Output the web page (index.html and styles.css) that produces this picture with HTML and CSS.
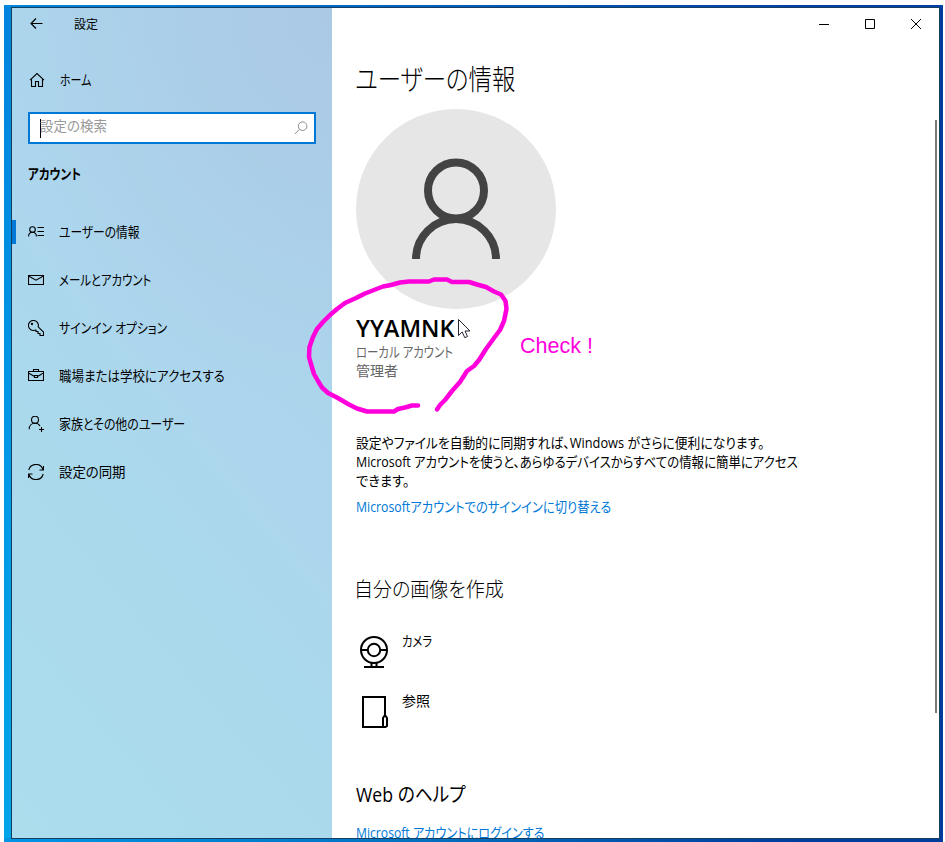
FILE: index.html
```
<!DOCTYPE html>
<html lang="ja">
<head>
<meta charset="utf-8">
<title>設定</title>
<link rel="stylesheet" href="styles.css">
</head>
<body>
<div class="desktop">
  <div class="window">
    <aside class="sidebar">
      <header class="titlebar">
        <svg class="back" width="14" height="12" viewBox="0 0 14 12"><path d="M12.500 5.500H1M6 .5l-5 5 5 5"/></svg>
        <span>設定</span>
      </header>
      <a class="item home">
        <svg class="icon" width="16" height="16" viewBox="0 0 16 16"><path d="M1 8.200L8 1.500l7 6.700M2.500 7v7.500h4v-5h3v5h4V7"/></svg>
        <span class="label w-home">ホーム</span>
      </a>
      <div class="search">
        <i class="caret"></i>
        <span class="label w-search">設定の検索</span>
        <svg class="lens" width="14" height="14" viewBox="0 0 14 14"><circle cx="8.600" cy="5.200" r="4.300"/><path d="M5.500 8.300L.8 13"/></svg>
      </div>
      <h2 class="section"><span class="label w-section">アカウント</span></h2>
      <nav>
        <a class="item active">
          <svg class="icon" width="16" height="16" viewBox="0 0 16 16"><circle cx="4.500" cy="5.500" r="2.800"/><path d="M.6 12.500c0-2.600 1.500-4.200 3.900-4.200s3.900 1.600 3.900 4.200M9.500 3.500H16M9.500 7.500H16M9.500 11.500H16"/></svg>
          <span class="label w-info">ユーザーの情報</span>
        </a>
        <a class="item">
          <svg class="icon" width="16" height="16" viewBox="0 0 16 16"><path d="M.5 3.500h15v9H.5zM.5 4L8 8.200 15.500 4"/></svg>
          <span class="label w-mail">メールとアカウント</span>
        </a>
        <a class="item">
          <svg class="icon" width="16" height="16" viewBox="0 0 16 16"><path d="M10.200 6.800A5 5 0 1 0 6.600 10.300L8 10.200v1.300h2v2h2v2h3.500v-3.500z"/><circle cx="4" cy="4" r=".6"/></svg>
          <span class="label w-signin">サインイン オプション</span>
        </a>
        <a class="item">
          <svg class="icon" width="16" height="16" viewBox="0 0 16 16"><path d="M.5 3.500h15v9H.5zM5.500 3.500v-2h5v2M.5 5L6.500 8.500M9.500 8.500l6-3.500M6.500 7.500h3v2h-3z"/></svg>
          <span class="label w-work">職場または学校にアクセスする</span>
        </a>
        <a class="item">
          <svg class="icon" width="16" height="16" viewBox="0 0 16 16"><circle cx="7" cy="3.700" r="3.500"/><path d="M1.200 13.200C1.200 9.700 3.500 7.200 7 7.200c2.300 0 4 .9 5 2.700M13.500 11v5M11 13.500h5"/></svg>
          <span class="label w-family">家族とその他のユーザー</span>
        </a>
        <a class="item">
          <svg class="icon" width="16" height="16" viewBox="0 0 16 16"><path d="M.8 6A7.400 7.400 0 0 1 15 5.500M15.500 2v4h-4M15.200 10A7.400 7.400 0 0 1 1 10.500M.5 14v-4h4"/></svg>
          <span class="label w-sync">設定の同期</span>
        </a>
      </nav>
    </aside>
    <main class="content">
      <div class="controls">
        <span><svg width="10" height="10" viewBox="0 0 10 10"><path d="M0 5.500h10"/></svg></span>
        <span><svg width="10" height="10" viewBox="0 0 10 10"><path d="M.5.5h9v9h-9z"/></svg></span>
        <span><svg width="10" height="10" viewBox="0 0 10 10"><path d="M0 0l10 10M10 0L0 10"/></svg></span>
      </div>
      <h1><span class="label w-h1">ユーザーの情報</span></h1>
      <div class="avatar">
        <svg width="200" height="200" viewBox="0 0 200 200"><circle cx="100" cy="81.500" r="28"/><path d="M60 150a40 40 0 0 1 80 0"/></svg>
      </div>
      <div class="name"><span class="label w-name">YYAMNK</span></div>
      <div class="meta"><span class="label w-local">ローカル アカウント</span></div>
      <div class="meta">管理者</div>
      <div class="text">
        <div><span class="label w-p1">設定やファイルを自動的に同期すれば、Windows がさらに便利になります。</span></div>
        <div><span class="label w-p2">Microsoft アカウントを使うと、あらゆるデバイスからすべての情報に簡単にアクセス</span></div>
        <div><span class="label w-p3">できます。</span></div>
      </div>
      <a class="link"><span class="label w-switch">Microsoftアカウントでのサインインに切り替える</span></a>
      <h3 class="create"><span class="label w-create">自分の画像を作成</span></h3>
      <div class="source">
        <svg width="36" height="36" viewBox="0 0 36 36"><circle cx="18" cy="17" r="13"/><circle cx="18" cy="17" r="6.200"/><path d="M5 17h7M24 17h7M15.500 30v4M20.500 30v4M8 34h20"/></svg>
        <span class="label w-camera">カメラ</span>
      </div>
      <div class="source">
        <svg width="36" height="36" viewBox="0 0 36 36"><path d="M29 22V4H7v30h21M27 34V25l2-3 2 3v8l-1.500 1z"/></svg>
        <span class="label">参照</span>
      </div>
      <h3 class="help"><span class="label w-help">Web のヘルプ</span></h3>
      <a class="link"><span class="label w-login">Microsoft アカウントにログインする</span></a>
      <i class="scrollbar"></i>
    </main>
  </div>
  <svg class="markup" width="945" height="842" viewBox="0 0 945 842">
    <path class="pointer" d="M458.500 319.500v16l3.700-3.500 2.600 5.700 2.700-1.200-2.500-5.500h5z"/>
    <path class="ink" d="M418 405.500L412 405.500 405 407.500 398 409 394 411.500 367 411.500 357 408.500 349 404.500 343 401 336 397 328 393 322 387.500 318 381 314 374 311 364 309 357 309.500 347 313 337 317 329 323 322 330 315 337 309 345 303 356 298 365 293.500 374 290 383 286.500 391 285 400 282.500 409 281.500 429 281.500 434 279.500 447 279.500 452 282 469 282 477 284.500 486 287 494 291.500 501 294.500 505.500 301 506.500 309 504 321 500 330 494 338 486 349 479 360 474 366 467 371 460 382 452 391 445 400 440 405 437 409.500"/>
  </svg>
  <span class="check">Check !</span>
</div>
</body>
</html>
```
FILE: styles.css
```
* { box-sizing: border-box; }
body {
  margin: 0;
  height: 842px;
  overflow: hidden;
  padding: 5px 2px 0 4px;
  background: #fff;
  color: #000;
  font: 14px/20px "Open Sans", "Noto Sans CJK JP", sans-serif;
  font-feature-settings: "palt";
}
h1, h2, h3 { margin: 0; }
svg { fill: none; stroke: #000; flex: none; }
.desktop {
  height: 837px;
  padding: 2px 3px 3px 7px;
  background:
    linear-gradient(90deg, #0095e4, #0070c0 45%, #003c9c 85%) bottom / 100% 4px no-repeat,
    linear-gradient(90deg, #0086dc, #0060be 45%, #003ea8 85%) top / 100% 3px no-repeat,
    linear-gradient(90deg, transparent 50%, #003c9e 50%),
    linear-gradient(#0083dc, #0098e6 50%, #00a4e8);
}
.window {
  display: flex;
  height: 832px;
  border: 1px solid #143f60;
  overflow: hidden;
}
.sidebar {
  width: 320px;
  flex: none;
  background:
    radial-gradient(ellipse 320px 400px at 100% 0, #abc9e5, rgba(171, 201, 229, 0)),
    linear-gradient(50deg, #abdded 0%, #aad9ec 35%, #acd6ed 55%, #abd3ea 100%);
}
.titlebar {
  display: flex;
  align-items: center;
  height: 32px;
  padding-left: 18px;
  font-size: 12px;
}
.titlebar span { margin: 2px 0 0 30px; }
.back { stroke-width: 1.2; }
.icon { stroke-width: 1.1; }
.label {
  display: inline-block;
  white-space: nowrap;
  transform-origin: 0 50%;
}
.item {
  display: flex;
  align-items: center;
  height: 48px;
  padding-left: 16px;
}
.item .label { margin-left: 15px; }
.home { height: 40px; margin: 20px 0 12px; padding-left: 17px; }
.active {
  height: 24px;
  margin: 12px 0;
  padding-left: 12px;
  border-left: 4px solid #0078d7;
}
.search {
  display: flex;
  align-items: center;
  width: 288px;
  height: 32px;
  margin: 8px 0 0 16px;
  padding: 0 6px 0 10px;
  border: 2px solid #0078d7;
  background: #fff;
  color: #999;
}
.search .label { margin: -4px 0 0 -1px; }
.caret { width: 1px; height: 19px; background: #000; }
.lens { margin-left: auto; stroke: #8c8c8c; }
.section {
  margin: 20px 0 36px 16px;
  font-size: 14px;
  line-height: 20px;
}
.content {
  position: relative;
  flex: 1;
  padding-left: 24px;
  background: #fff;
}
.controls {
  display: flex;
  justify-content: flex-end;
  height: 32px;
}
.controls span {
  display: flex;
  align-items: center;
  justify-content: center;
  width: 46px;
}
h1 {
  margin: 19px 0 0 -1px;
  height: 50px;
  font-size: 28px;
  font-weight: 300;
  line-height: 40px;
}
.avatar {
  width: 200px;
  height: 200px;
  border-radius: 50%;
  background: #e6e6e6;
}
.avatar svg { stroke: #434343; stroke-width: 8; }
.name {
  margin-top: 4px;
  height: 29px;
  font-size: 24px;
  font-weight: 600;
  line-height: 30px;
}
.meta { height: 19px; line-height: 19px; color: #666; }
.text { margin-top: 53px; line-height: 19px; }
.text div { height: 19px; }
.link { display: block; height: 20px; color: #0078d7; }
.text + .link { margin-top: 7px; }
h3 {
  height: 30px;
  font-size: 20px;
  font-weight: 300;
  line-height: 30px;
}
.create { margin: 58px 0 26px -2px; }
.source {
  display: flex;
  height: 60px;
}
.source svg { margin-top: 2px; stroke-width: 2; }
.source .label { margin-left: 10px; }
.help { margin: 29px 0 13px; font-weight: 400; }
.scrollbar {
  position: absolute;
  right: 2px;
  top: 112px;
  width: 2px;
  height: 593px;
  background: #7a7a7a;
}
.markup { position: absolute; left: 0; top: 0; }
.pointer { fill: #fff; stroke: #223; }
.ink {
  stroke: #ff00dc;
  stroke-width: 4.500;
  stroke-linecap: round;
  stroke-linejoin: round;
}
.check {
  position: absolute;
  left: 520px;
  top: 334px;
  color: #ff00dc;
  font: 21.500px/24px "Liberation Sans", sans-serif;
}
/* Condensed kana widths, one factor per label */
.w-home { transform: scaleX(.78); }
.w-search { transform: scaleX(.965); }
.w-section { transform: scaleX(.83); }
.w-info { transform: scaleX(.84); }
.w-mail { transform: scaleX(.815); }
.w-signin { transform: scaleX(.845); }
.w-work { transform: scaleX(.893); }
.w-family { transform: scaleX(.853); }
.w-sync { transform: scaleX(.957); }
.w-h1 { transform: scaleX(.836); }
.w-name { transform: scaleX(.98); }
.w-local { transform: scaleX(.815); }
.w-p1 { transform: scaleX(.914); }
.w-p2 { transform: scaleX(.887); }
.w-p3 { transform: scaleX(.95); }
.w-switch { transform: scaleX(.878); }
.w-create { transform: scaleX(.95); }
.w-camera { transform: scaleX(.81); }
.w-help { transform: scaleX(.885); }
.w-login { transform: scaleX(.869); }
```
